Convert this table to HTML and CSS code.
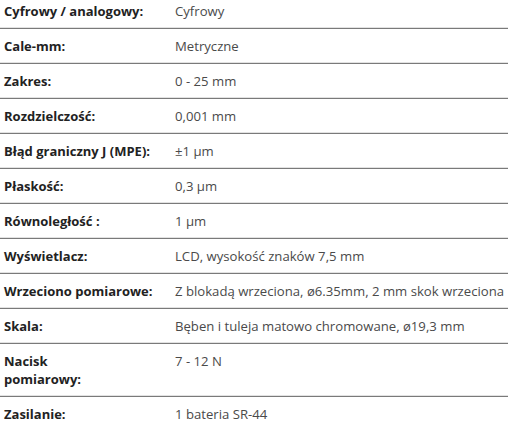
FILE: index.html
```html
<!DOCTYPE html>
<html lang="pl">
<head>
<meta charset="utf-8">
<link rel="stylesheet" href="styles.css">
</head>
<body>
<div class="specs">
  <div class="row"><div class="label">Cyfrowy / analogowy:</div><div class="value">Cyfrowy</div></div>
  <div class="row"><div class="label">Cale-mm:</div><div class="value">Metryczne</div></div>
  <div class="row"><div class="label">Zakres:</div><div class="value">0 - 25 mm</div></div>
  <div class="row"><div class="label">Rozdzielczość:</div><div class="value">0,001 mm</div></div>
  <div class="row"><div class="label">Błąd graniczny J (MPE):</div><div class="value">±1 µm</div></div>
  <div class="row"><div class="label">Płaskość:</div><div class="value">0,3 µm</div></div>
  <div class="row"><div class="label">Równoległość :</div><div class="value">1 µm</div></div>
  <div class="row"><div class="label">Wyświetlacz:</div><div class="value">LCD, wysokość znaków 7,5 mm</div></div>
  <div class="row"><div class="label">Wrzeciono pomiarowe:</div><div class="value">Z blokadą wrzeciona, ø6.35mm, 2 mm skok wrzeciona</div></div>
  <div class="row"><div class="label">Skala:</div><div class="value">Bęben i tuleja matowo chromowane, ø19,3 mm</div></div>
  <div class="row"><div class="label">Nacisk<br>pomiarowy:</div><div class="value">7 - 12 N</div></div>
  <div class="row"><div class="label">Zasilanie:</div><div class="value">1 bateria SR-44</div></div>
</div>
</body>
</html>
```
FILE: styles.css
```css
html, body {
  margin: 0;
  padding: 0;
  background: #fff;
}
body {
  font-family: "Open Sans", "DejaVu Sans", sans-serif;
  font-size: 13px;
  line-height: 18px;
}
.specs {
  width: 508px;
  margin-top: -6px;
}
.row {
  display: grid;
  grid-template-columns: 170px 1fr;
  padding: 8px 0;
  border-bottom: 1px solid #7a7a7a;
  box-shadow: 0 -1px 0 #e2e2e2 inset;
}
.row:last-child {
  border-bottom: none;
  box-shadow: none;
}
.label {
  padding-left: 4px;
  font-weight: 700;
  color: #222;
}
.value {
  padding-left: 5px;
  font-size: 13.15px;
  color: #4a4a4a;
  white-space: nowrap;
}
```
